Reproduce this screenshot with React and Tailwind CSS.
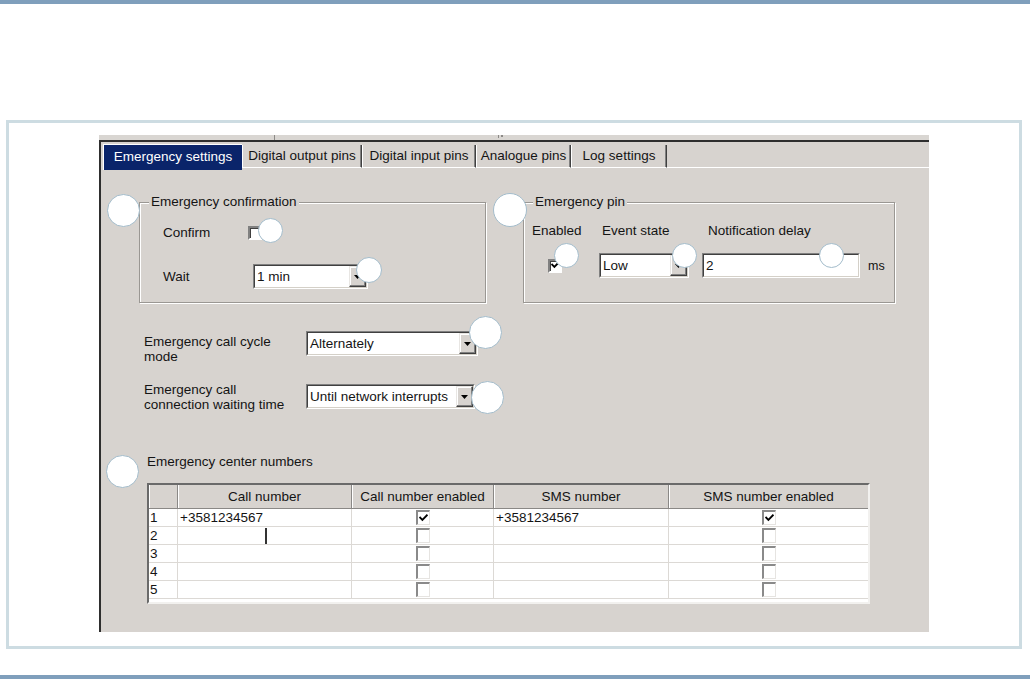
import React from "react";

function Tri() {
  return (
    <svg width="7" height="4" viewBox="0 0 7 4">
      <path d="M0 0h7L3.5 4z" fill="#000" />
    </svg>
  );
}

function Tick() {
  return (
    <svg width="9" height="9" viewBox="0 0 9 9" className="block">
      <polyline points="1.2,3.6 3.4,5.8 7.8,1.4" fill="none" stroke="#000" strokeWidth="1.9" strokeLinecap="square" />
    </svg>
  );
}

function Select({ text, w, btn = true }) {
  return (
    <div className={`flex h-[25px] ${w} border border-t-[#808080] border-l-[#808080] border-r-white border-b-white`}>
      <div className="flex flex-1 border border-t-[#404040] border-l-[#404040] border-r-[#d4d0c8] border-b-[#d4d0c8] bg-white">
        <span className="flex-1 pl-[2px] flex items-center leading-[16px] whitespace-nowrap overflow-hidden">{text}</span>
        {btn && (
          <div className="w-[17px] flex items-center justify-center bg-[#d7d3cf] border border-t-[#e8e6e3] border-l-[#e8e6e3] border-r-[#404040] border-b-[#404040] shadow-[inset_-1px_-1px_0_#808080,inset_1px_1px_0_#fff]">
            <Tri />
          </div>
        )}
      </div>
    </div>
  );
}

function DlgCheck({ checked }) {
  return (
    <div className="w-[14px] h-[14px] bg-white border-2 border-t-[#808080] border-l-[#808080] border-r-white border-b-white shadow-[inset_1px_1px_0_#404040] flex items-center justify-center">
      {checked && <Tick />}
    </div>
  );
}

function GridCheck({ checked }) {
  return (
    <div className="w-[14px] h-[15px] bg-white border-t-2 border-l-2 border-r border-b border-t-[#8a8a8a] border-l-[#8a8a8a] border-r-[#e6e4e1] border-b-[#e6e4e1] flex items-center justify-center">
      {checked && <Tick />}
    </div>
  );
}

function Row({ n, call, callOn, sms, smsOn, cursor }) {
  const cell = "h-[18px] border-r border-b border-[#dcd9d5] flex items-center leading-[16px]";
  return (
    <div className="grid grid-cols-[29px_174px_142px_175px_1fr]">
      <div className={`${cell} pl-[1px]`}>{n}</div>
      <div className={`${cell} pl-[2px]`}>
        {call}
        {cursor && <div className="ml-[85px] w-[2px] h-[16px] bg-[#333]" />}
      </div>
      <div className={`${cell} justify-center`}>
        <GridCheck checked={callOn} />
      </div>
      <div className={`${cell} pl-[2px]`}>{sms}</div>
      <div className={`${cell} justify-center border-r-0`}>
        <GridCheck checked={smsOn} />
      </div>
    </div>
  );
}

function HeadCell({ children, last }) {
  return (
    <div
      className={`h-full flex items-center justify-center whitespace-nowrap shadow-[inset_1px_0_0_#fff] ${
        last ? "" : "border-r border-r-[#8a8886]"
      }`}
    >
      {children}
    </div>
  );
}

const circ = "absolute rounded-full bg-white border border-[#a3bccb]";

export default function App() {
  return (
    <div className="relative w-[1030px] h-[679px] bg-white overflow-hidden flex flex-col font-['Liberation_Sans',Arial,sans-serif] text-[13.5px] text-[#141414]">
      <div className="h-[4px] bg-[#7f9fbc]" />

      <div className="mt-[116px] ml-[6px] w-[1016px] h-[529px] border-[3px] border-[#cddce2] pl-[90px] pt-[12px]">
        <div className="w-[830px] h-[497px] bg-[#d7d3cf] flex flex-col">
          {/* strip of the window behind */}
          <div className="h-[5px] flex bg-[#d9d6d2]">
            <div className="w-[175px]" />
            <div className="w-px bg-[#8c8a87]" />
            <div className="w-[223px]" />
            <div className="w-px h-[3px] bg-[#8c8a87]" />
            <div className="w-[2px]" />
            <div className="w-[2px] h-[2px] bg-[#8c8a87]" />
          </div>

          <div className="flex-1 flex flex-col border-l-2 border-t-2 border-[#2e2e2e]">
            {/* tabs */}
            <div className="flex h-[28px] pl-[2px]">
              <div className="mt-[2px] h-[26px] w-[139px] bg-[#0a246a] text-white border-t border-l border-white flex items-center justify-center whitespace-nowrap">
                Emergency settings
              </div>
              <div className="mt-[3px] h-[23px] w-[120px] border-l border-l-white border-r border-r-[#404040] border-b border-b-white shadow-[inset_-1px_0_0_#808080] flex items-center justify-center whitespace-nowrap">
                Digital output pins
              </div>
              <div className="mt-[3px] h-[23px] w-[114px] border-l border-l-white border-r border-r-[#404040] border-b border-b-white shadow-[inset_-1px_0_0_#808080] flex items-center justify-center whitespace-nowrap">
                Digital input pins
              </div>
              <div className="mt-[3px] h-[23px] w-[95px] border-l border-l-white border-r border-r-[#404040] border-b border-b-white shadow-[inset_-1px_0_0_#808080] flex items-center justify-center whitespace-nowrap">
                Analogue pins
              </div>
              <div className="mt-[3px] h-[23px] w-[96px] border-l border-l-white border-r border-r-[#404040] border-b border-b-white shadow-[inset_-1px_0_0_#808080] flex items-center justify-center whitespace-nowrap">
                Log settings
              </div>
              <div className="flex-1 h-[26px] border-b border-b-white" />
            </div>

            {/* content */}
            <div className="flex flex-col pl-[38px]">
              <div className="flex mt-[24px] gap-[37px]">
                <fieldset className="w-[347px] h-[109px] min-w-0 border border-[#9a9793] shadow-[1px_1px_0_#fff,inset_1px_1px_0_#fff]">
                  <legend className="ml-[9px] px-[2px] leading-[16px] bg-[#d7d3cf] whitespace-nowrap">
                    Emergency confirmation
                  </legend>
                  <div className="flex items-center h-[16px] mt-[15px] pl-[23px]">
                    <span className="w-[85px] leading-[16px]">Confirm</span>
                    <DlgCheck />
                  </div>
                  <div className="flex items-center h-[25px] mt-[23px] pl-[23px]">
                    <span className="w-[90px] leading-[16px]">Wait</span>
                    <Select text="1 min" w="w-[115px]" />
                  </div>
                </fieldset>

                <fieldset className="w-[372px] h-[109px] min-w-0 border border-[#9a9793] shadow-[1px_1px_0_#fff,inset_1px_1px_0_#fff]">
                  <legend className="ml-[9px] px-[2px] leading-[16px] bg-[#d7d3cf] whitespace-nowrap">
                    Emergency pin
                  </legend>
                  <div className="flex h-[16px] mt-[13px] leading-[16px] whitespace-nowrap">
                    <span className="w-[75px] pl-[8px]">Enabled</span>
                    <span className="w-[103px] pl-[3px]">Event state</span>
                    <span className="pl-[6px]">Notification delay</span>
                  </div>
                  <div className="flex items-center h-[25px] mt-[14px]">
                    <div className="w-[75px] pl-[24px] flex items-center">
                      <DlgCheck checked />
                    </div>
                    <Select text="Low" w="w-[90px]" />
                    <div className="ml-[13px]">
                      <Select text="2" w="w-[158px]" btn={false} />
                    </div>
                    <span className="ml-[8px] text-[12.5px] leading-[16px]">ms</span>
                  </div>
                </fieldset>
              </div>

              <div className="flex items-start mt-[28px] pl-[5px]">
                <div className="w-[162px] mt-[3px] leading-[15px]">
                  Emergency call cycle
                  <br />
                  mode
                </div>
                <Select text="Alternately" w="w-[172px]" />
              </div>

              <div className="flex items-start mt-[18px] pl-[5px]">
                <div className="w-[162px] leading-[15px] whitespace-nowrap">
                  Emergency call
                  <br />
                  connection waiting time
                </div>
                <div className="mt-[2px]">
                  <Select text="Until network interrupts" w="w-[169px]" />
                </div>
              </div>

              <div className="mt-[42px] pl-[8px] h-[16px] leading-[16px]">Emergency center numbers</div>

              <div className="mt-[13px] ml-[8px] w-[723px] bg-white border-2 border-t-[#6a6a6a] border-l-[#6a6a6a] border-r-[#f2f1ef] border-b-[#f2f1ef]">
                <div className="grid grid-cols-[29px_174px_142px_175px_1fr] h-[24px] bg-[#d7d3cf] border-b border-b-[#8a8886] leading-[16px]">
                  <HeadCell />
                  <HeadCell>Call number</HeadCell>
                  <HeadCell>Call number enabled</HeadCell>
                  <HeadCell>SMS number</HeadCell>
                  <HeadCell last>SMS number enabled</HeadCell>
                </div>
                <Row n="1" call="+3581234567" callOn sms="+3581234567" smsOn />
                <Row n="2" cursor />
                <Row n="3" />
                <Row n="4" />
                <Row n="5" />
                <div className="h-[3px]" />
              </div>
            </div>
          </div>
        </div>
      </div>

      <div className="mt-[26px] h-[4px] bg-[#7f9fbc]" />

      {/* annotation circles */}
      <div className={`${circ} left-[107px] top-[194px] w-[33px] h-[33px]`} />
      <div className={`${circ} left-[258px] top-[218px] w-[25px] h-[25px]`} />
      <div className={`${circ} left-[356px] top-[257px] w-[26px] h-[26px]`} />
      <div className={`${circ} left-[493px] top-[193px] w-[34px] h-[34px]`} />
      <div className={`${circ} left-[554px] top-[243px] w-[25px] h-[25px]`} />
      <div className={`${circ} left-[672px] top-[243px] w-[25px] h-[25px]`} />
      <div className={`${circ} left-[819px] top-[243px] w-[25px] h-[25px]`} />
      <div className={`${circ} left-[469px] top-[316px] w-[33px] h-[33px]`} />
      <div className={`${circ} left-[471px] top-[381px] w-[33px] h-[33px]`} />
      <div className={`${circ} left-[106px] top-[455px] w-[33px] h-[33px]`} />
    </div>
  );
}
